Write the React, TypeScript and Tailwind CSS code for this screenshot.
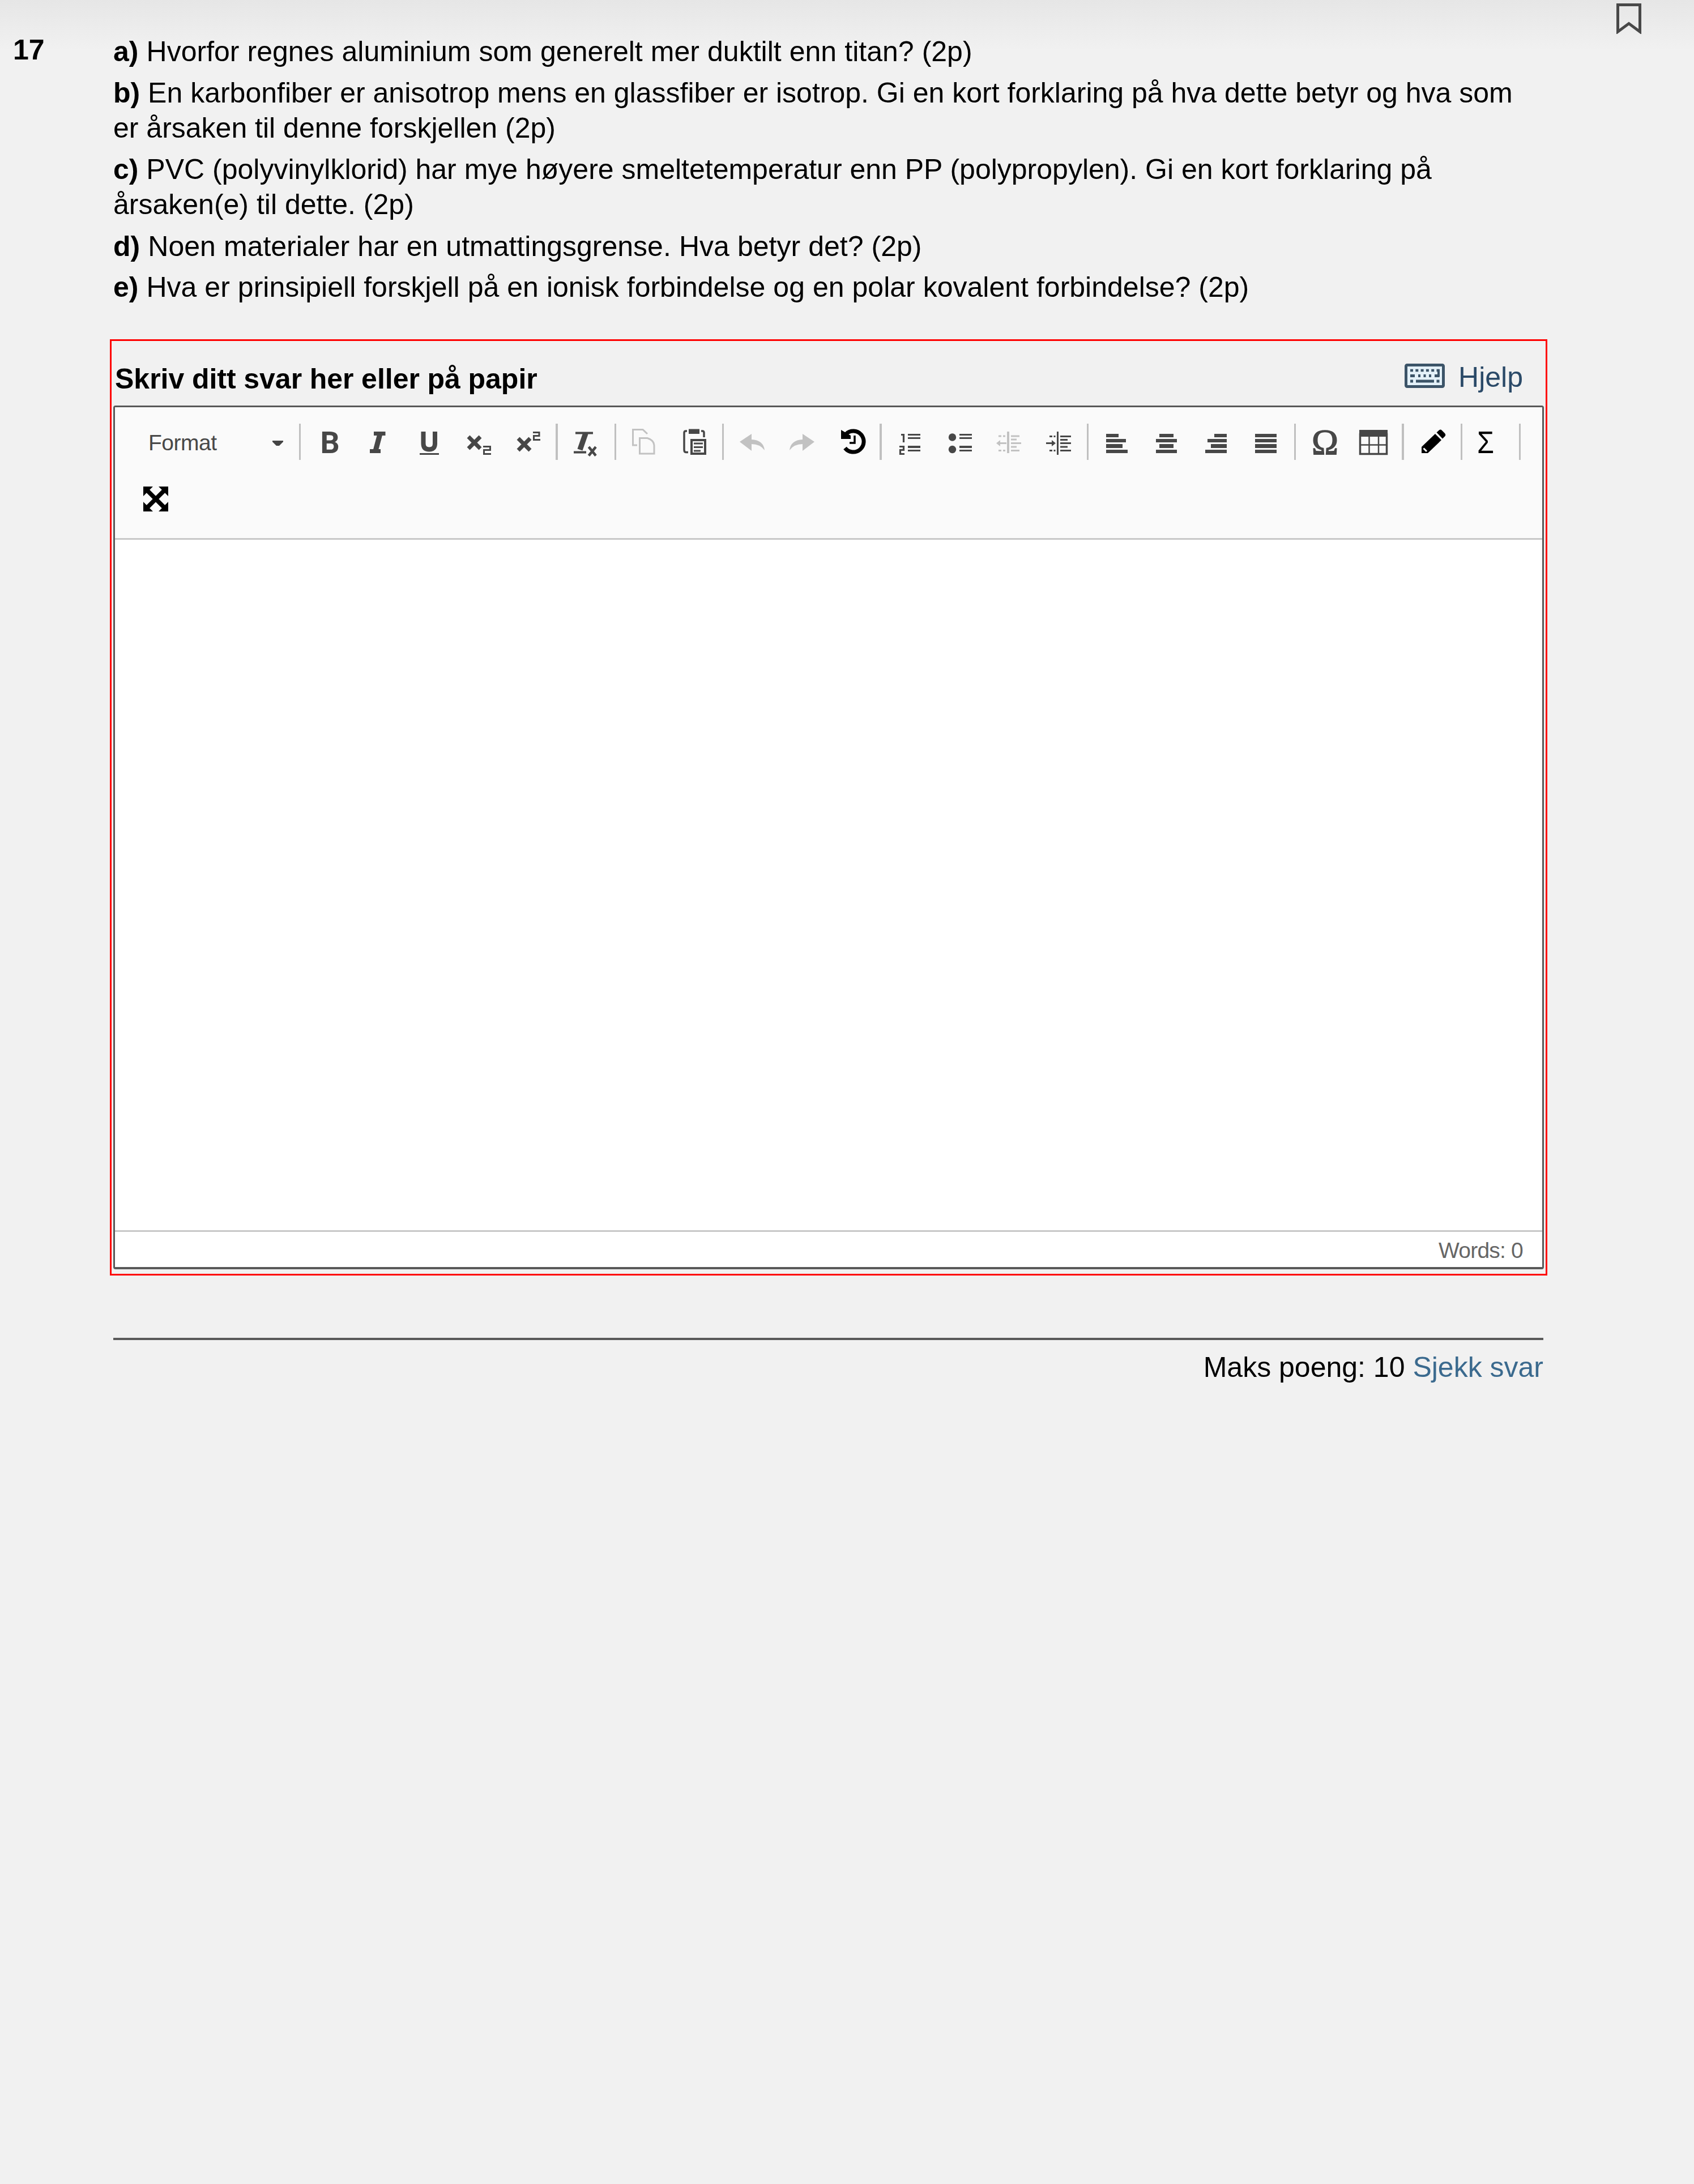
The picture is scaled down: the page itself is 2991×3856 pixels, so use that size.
import type { ReactNode } from "react";

/* A toolbar cell: the drawing uses the toolbar's own coordinate system, so each
   cell shows the slice [x, x + w] of it. */
function Tool({ x, w, label, muted, black, children }: { x: number; w: number; label: string; muted?: boolean; black?: boolean; children: ReactNode }) {
  const tone = muted ? "text-[#c2c2c2]" : black ? "text-black" : "text-[#474747]";
  return (
    <button type="button" aria-label={label} className={`h-20 shrink-0 ${tone}`}>
      <svg width={w} height={80} viewBox={`${x} 740 ${w} 80`} fill="none" stroke="currentColor" className="block">
        {children}
      </svg>
    </button>
  );
}

function Sep({ wide }: { wide?: boolean }) {
  return <div className={`h-16 shrink-0 bg-[#c0c0c0] ${wide ? "w-1" : "w-[3px]"}`} />;
}

function Bars({ rows }: { rows: [number, number][] }) {
  const ys = [766, 775, 784, 794];
  return (
    <g fill="currentColor" stroke="none">
      {rows.map(([a, b], i) => (
        <rect key={i} x={a} y={ys[i]} width={b - a} height={i === 2 ? 7 : 6} />
      ))}
    </g>
  );
}

function Toolbar() {
  return (
    <div className="h-[234px] border-b-[3px] border-[#c8c8c8] bg-[#fafafa] pt-[21px]">
      <div className="flex items-center">
        <div className="flex h-20 w-[325px] shrink-0 items-center justify-between pr-[28px] pl-[59px]">
          <span className="pt-[2px] text-[39px] leading-none tracking-[-0.5px] text-[#484848]">Format</span>
          <svg width="19" height="9" viewBox="0 0 19 9" className="mt-1">
            <path d="M0 0H19V2L12 9H7L0 2Z" fill="#444444" />
          </svg>
        </div>
        <Sep />
        <Tool x={531} w={88} label="Fet">
          <text x="565.5" y="800" fontFamily="Roboto" fontWeight="700" fontSize="53.5" fill="currentColor" stroke="none">B</text>
        </Tool>
        <Tool x={619} w={93} label="Kursiv">
          <path d="M660 765.5H680.5M653 796.5H672" strokeWidth="7" />
          <path d="M671.5 764L662.5 798" strokeWidth="9" />
        </Tool>
        <Tool x={712} w={88} label="Understreket">
          <path d="M747.5 762V783Q747.5 793.5 757.8 793.5T768 783V762" strokeWidth="8" />
          <path d="M741 801.5H775" strokeWidth="3" />
        </Tool>
        <Tool x={800} w={90} label="Senket">
          <path d="M827 771L848 792M848 771L827 792" strokeWidth="7" />
          <path d="M853 788.5H865.5V794.5H854.5V801.5H867" strokeWidth="3" />
        </Tool>
        <Tool x={890} w={91} label="Hevet">
          <path d="M915 774L936 795M936 774L915 795" strokeWidth="7" />
          <path d="M941 763.5H952V769.5H942.5V776.5H954" strokeWidth="3" />
        </Tool>
        <Sep wide />
        <Tool x={985} w={100} label="Fjern formatering">
          <path d="M1016 764.5H1047M1013 798.5H1035" strokeWidth="4" />
          <path d="M1034 765L1024 794" strokeWidth="9.5" />
          <path d="M1039.5 789L1052 804.5M1052 789L1039.5 804.5" strokeWidth="4.5" />
        </Tool>
        <Sep />
        <Tool x={1088} w={92} label="Kopier" muted>
          <path d="M1125 786H1117.5V758.5H1135L1143 766" strokeWidth="3" />
          <path d="M1129.5 773.5H1143Q1154.5 777 1155 786V801H1129.5Z" strokeWidth="3" />
        </Tool>
        <Tool x={1180} w={95} label="Lim inn">
          <path d="M1216 757.5H1235V766H1216Z" fill="currentColor" stroke="none" />
          <path d="M1213 761H1211Q1208 761 1208 764V794Q1208 798.5 1211 798.5H1215M1238 761H1240Q1243 761 1243 764V772" strokeWidth="3.5" />
          <path d="M1221 777H1245V801H1221Z" strokeWidth="4" />
          <path d="M1225 783H1241M1225 789.5H1241M1225 796H1237" strokeWidth="3" />
        </Tool>
        <Sep />
        <Tool x={1278} w={94} label="Angre" muted>
          <path d="M1306 780L1327 766V776Q1348 777 1350 795Q1342 784 1327 784V796Z" fill="currentColor" stroke="none" />
        </Tool>
        <Tool x={1372} w={90} label="Gjenta" muted>
          <path d="M1438 780L1417 766V776Q1396 777 1394 795Q1402 784 1417 784V796Z" fill="currentColor" stroke="none" />
        </Tool>
        <Tool x={1462} w={91} label="Historikk" black>
          <path d="M1494 766A18.5 18.5 0 1 1 1492 791" strokeWidth="7" />
          <path d="M1485 759L1502 769V775H1485Z" fill="currentColor" stroke="none" />
          <path d="M1509 769V782H1500" strokeWidth="3.5" />
        </Tool>
        <Sep wide />
        <Tool x={1557} w={91} label="Nummerert liste">
          <path d="M1591 767.5H1595.5V781M1588 788.5H1595.5V794.5H1589.5V801.5H1597" strokeWidth="3.2" />
          <path d="M1603 767.5H1625M1603 773.5H1625M1603 795.5H1625" strokeWidth="3" />
          <path d="M1603 789H1625" strokeWidth="4" />
        </Tool>
        <Tool x={1648} w={90} label="Punktliste">
          <circle cx="1681.5" cy="772" r="6.7" fill="currentColor" stroke="none" />
          <circle cx="1681.5" cy="793.5" r="6.7" fill="currentColor" stroke="none" />
          <path d="M1694 767.5H1716M1694 773.5H1716M1694 795.5H1716" strokeWidth="3" />
          <path d="M1694 789H1716" strokeWidth="4" />
        </Tool>
        <Tool x={1738} w={90} label="Reduser innrykk" muted>
          <path d="M1780 762V800" strokeWidth="4" />
          <path d="M1785 770H1800M1785 776H1795M1785 782.5H1803M1785 789H1795M1785 795.5H1800" strokeWidth="3" />
          <path d="M1763 770H1768M1771 770H1775M1763 795.5H1768M1771 795.5H1775M1762 782.5H1777" strokeWidth="3" />
          <path d="M1759 782.5L1766 777V788Z" fill="currentColor" stroke="none" />
        </Tool>
        <Tool x={1828} w={91} label="Øk innrykk">
          <path d="M1867.5 762V803" strokeWidth="3" />
          <path d="M1872 770.5H1891M1872 776.5H1885M1872 782.5H1891M1872 789H1885M1872 795.5H1891" strokeWidth="3" />
          <path d="M1853 770.5H1858M1860.5 770.5H1863.5M1853 795.5H1858M1860.5 795.5H1863.5M1847 782.5H1860" strokeWidth="3" />
          <path d="M1864 782.5L1857 777V788Z" fill="currentColor" stroke="none" />
        </Tool>
        <Sep />
        <Tool x={1922} w={92} label="Venstrejuster">
          <Bars rows={[[1953, 1975], [1953, 1988], [1953, 1982], [1953, 1991]]} />
        </Tool>
        <Tool x={2014} w={90} label="Midtstill">
          <Bars rows={[[2047, 2072], [2041, 2078], [2047, 2072], [2041, 2078]]} />
        </Tool>
        <Tool x={2104} w={90} label="Høyrejuster">
          <Bars rows={[[2144, 2166], [2132, 2166], [2138, 2166], [2128, 2166]]} />
        </Tool>
        <Tool x={2194} w={91} label="Blokkjuster">
          <Bars rows={[[2216, 2254], [2216, 2254], [2216, 2254], [2216, 2254]]} />
        </Tool>
        <Sep />
        <Tool x={2288} w={94} label="Spesialtegn">
          <text x="2316" y="802" textLength="47" lengthAdjust="spacingAndGlyphs" fontFamily="Liberation Serif" fontSize="63" fill="currentColor" strokeWidth="1.5">Ω</text>
        </Tool>
        <Tool x={2382} w={93} label="Tabell">
          <path d="M2400 759H2450V771H2400Z" fill="currentColor" stroke="none" />
          <path d="M2401.5 765V801.5H2448.5V765" strokeWidth="3.5" />
          <path d="M2417.5 771V801M2434 771V801M2401 785.5H2449" strokeWidth="2.5" />
        </Tool>
        <Sep wide />
        <Tool x={2479} w={100} label="Tegn" black>
          <path d="M2510 800V789L2534 766L2545 777L2521 800Z" fill="currentColor" stroke="none" />
          <path d="M2536.5 763.5L2541 759.5Q2543.5 757.5 2546 760L2551 765Q2553.5 768 2551 770.5L2547 774.5Z" fill="currentColor" stroke="none" />
          <path d="M2513.5 791.5L2519 797" stroke="#fafafa" strokeWidth="3" />
        </Tool>
        <Sep />
        <Tool x={2582} w={100} label="Matematikk" black>
          <text x="2608" y="800" textLength="30" lengthAdjust="spacingAndGlyphs" fontFamily="Liberation Sans" fontSize="55" fill="currentColor" stroke="none">Σ</text>
        </Tool>
        <Sep />
      </div>
      <button type="button" aria-label="Fullskjerm" className="mt-[39px] ml-[50px] block">
        <svg width="44" height="44" viewBox="0 0 44 44" fill="#000000" className="block">
          <path d="M8 8L36 36M36 8L8 36" stroke="#000000" strokeWidth="7.5" />
          <path d="M0 0H17L0 17ZM44 0V17L27 0ZM0 44V27L17 44ZM44 44H27L44 27Z" />
        </svg>
      </button>
    </div>
  );
}

function KeyboardIcon() {
  return (
    <svg width="71" height="43" viewBox="0 0 71 43" fill="none" stroke="#3c5468" className="block">
      <rect x="2.5" y="2.5" width="66" height="38" rx="2" fill="#e4f1f9" strokeWidth="5" />
      <path d="M10 12H62" strokeWidth="4.5" strokeDasharray="5 4.3" />
      <path d="M10 21.5H18M24 21.5H28M33.5 21.5H37.5M43 21.5H47M53 21.5H61.5" strokeWidth="5" />
      <path d="M60 10V23" strokeWidth="4" />
      <path d="M10 31H15M20 31H52M56.5 31H61.5" strokeWidth="5" />
    </svg>
  );
}

export default function App() {
  return (
    <div className="flex h-[3856px] w-[2991px] overflow-hidden bg-[#f1f1f1] bg-[linear-gradient(to_bottom,#e6e6e6_0px,#f1f1f1_90px)] bg-no-repeat font-['Liberation_Sans',Arial,sans-serif] text-[50px] leading-[62.5px] text-black">
      <div className="w-[194px] shrink-0 pt-[57px] pl-[23px] font-bold">17</div>

      <main className="w-[2538px] shrink-0 pt-[60px]">
        <div className="flex h-[539px] flex-col gap-[10px] pl-[6px] whitespace-nowrap">
          <p className="[word-spacing:0.2px]">
            <b>a)</b> Hvorfor regnes aluminium som generelt mer duktilt enn titan? (2p)
          </p>
          <p>
            <b>b)</b> En karbonfiber er anisotrop mens en glassfiber er isotrop. Gi en kort forklaring på hva dette betyr og hva som
            <br />
            er årsaken til denne forskjellen (2p)
          </p>
          <p>
            <b>c)</b> PVC (polyvinylklorid) har mye høyere smeltetemperatur enn PP (polypropylen). Gi en kort forklaring på
            <br />
            årsaken(e) til dette. (2p)
          </p>
          <p className="mt-px [word-spacing:0.2px]">
            <b>d)</b> Noen materialer har en utmattingsgrense. Hva betyr det? (2p)
          </p>
          <p className="[word-spacing:0.1px]">
            <b>e)</b> Hva er prinsipiell forskjell på en ionisk forbindelse og en polar kovalent forbindelse? (2p)
          </p>
        </div>

        <section className="h-[1653px] border-[3px] border-[#ff0000] px-[3px]">
          <div className="flex h-[114px] justify-between pr-[37px] pl-[3px]">
            <h2 className="pt-[36px] font-bold [word-spacing:-0.3px]">Skriv ditt svar her eller på papir</h2>
            <a className="flex text-[#2b4a68]">
              <span className="mt-[40px] mr-[24px]">
                <KeyboardIcon />
              </span>
              <span className="pt-[33px]">Hjelp</span>
            </a>
          </div>
          <div className="flex h-[1525px] flex-col overflow-hidden rounded-[4px] border-[3px] border-b-4 border-[#595959] bg-white">
            <Toolbar />
            <div className="h-[1219px] bg-white" />
            <div className="h-[65px] border-t-[3px] border-[#c8c8c8] pt-[5px] pr-[34px] text-right text-[39px] leading-[56px] tracking-[-0.8px] text-[#666666]">
              Words: 0
            </div>
          </div>
        </section>

        <footer className="mt-[110px] mr-[7px] ml-[6px] border-t-4 border-[#595959] pt-[17px] text-right">
          Maks poeng: 10 <a className="text-[#3b6a8e]">Sjekk svar</a>
        </footer>
      </main>

      <div className="ml-[122px] pt-[6px]">
        <svg width="44" height="54" viewBox="0 0 44 54" fill="none" stroke="#484848" strokeWidth="5" className="block">
          <path d="M2.5 2.5H41.5V50L22 35.5L2.5 50Z" />
        </svg>
      </div>
    </div>
  );
}
